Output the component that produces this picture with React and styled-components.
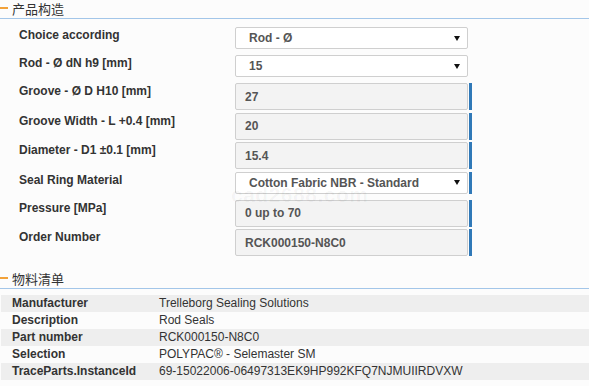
import React from "react";
import styled, { createGlobalStyle } from "styled-components";

const GlobalStyle = createGlobalStyle`
  body {
    margin: 0;
    background-color: #fcfcfc;
    font-family: "Liberation Sans", Arial, sans-serif;
  }
`;

const Page = styled.div`
  position: relative;
  width: 589px;
  height: 386px;
  overflow: hidden;
  background-color: #fcfcfc;
`;

const SectionTitle = styled.div`
  display: flex;
  align-items: center;
  height: 18px;
  border-bottom: 1px solid #a3c6e9;
  margin-top: ${(p) => p.$top || 0}px;
`;

const Dash = styled.span`
  width: 8px;
  height: 2px;
  background-color: #f2a23a;
  margin-top: -2px;
`;

const TitleText = styled.span`
  margin-left: 4px;
  font-family: "Noto Sans CJK SC", "Liberation Sans", sans-serif;
  font-size: 13px;
  line-height: 16px;
  color: #333;
`;

const Form = styled.div`
  padding-top: 8px;
`;

const Row = styled.div`
  display: grid;
  grid-template-columns: 235px 233px 4px;
  align-items: start;
  margin-bottom: ${(p) => (p.$select ? 6 : 2.5)}px;
`;

const Label = styled.div`
  padding-left: 19px;
  font-size: 12px;
  font-weight: bold;
  line-height: 16px;
  color: #333;
`;

const SelectBox = styled.div`
  box-sizing: border-box;
  height: 22px;
  display: flex;
  align-items: center;
  justify-content: space-between;
  padding: 0 7px 0 13px;
  background-color: #fff;
  border: 1px solid #cfcfcf;
  border-radius: 2px;
  font-size: 12px;
  font-weight: bold;
  color: #555;
`;

const InputBox = styled.div`
  box-sizing: border-box;
  height: 27px;
  display: flex;
  align-items: center;
  padding: 0 9px;
  background-color: #f3f3f3;
  border: 1px solid #cfcfcf;
  border-radius: 2px;
  font-size: 12px;
  font-weight: bold;
  color: #555;
`;

const Bar = styled.div`
  margin-left: 1px;
  width: 3px;
  height: ${(p) => (p.$select ? 22 : 27)}px;
  background-color: #3079b8;
`;

const Arrow = () => (
  <svg width="6" height="5" viewBox="0 0 6 5">
    <path d="M0 0 H6 L3 5 Z" fill="#111" />
  </svg>
);

const Table = styled.div`
  margin: 6px 0 0 1px;
`;

const TableRow = styled.div`
  display: grid;
  grid-template-columns: 158px 1fr;
  height: 17px;
  align-items: center;
  background-color: ${(p) => (p.$shaded ? "#eeeeee" : "transparent")};
  font-size: 12px;
  color: #333;
`;

const Key = styled.div`
  padding-left: 11px;
  font-weight: bold;
`;

const Value = styled.div`
  white-space: nowrap;
`;

const Watermark = styled.div`
  position: absolute;
  left: 231px;
  top: 183px;
  font-size: 21px;
  font-weight: bold;
  color: rgba(0, 0, 0, 0.045);
  pointer-events: none;
  letter-spacing: 0.5px;
`;

const fields = [
  { label: "Choice according", value: "Rod - Ø", select: true },
  { label: "Rod - Ø dN h9 [mm]", value: "15", select: true },
  { label: "Groove - Ø D H10 [mm]", value: "27", bar: true },
  { label: "Groove Width - L +0.4 [mm]", value: "20", bar: true },
  { label: "Diameter - D1 ±0.1 [mm]", value: "15.4", bar: true },
  { label: "Seal Ring Material", value: "Cotton Fabric NBR - Standard", select: true, bar: true },
  { label: "Pressure [MPa]", value: "0 up to 70", bar: true },
  { label: "Order Number", value: "RCK000150-N8C0", bar: true },
];

const bom = [
  ["Manufacturer", "Trelleborg Sealing Solutions"],
  ["Description", "Rod Seals"],
  ["Part number", "RCK000150-N8C0"],
  ["Selection", "POLYPAC® - Selemaster SM"],
  ["TraceParts.InstanceId", "69-15022006-06497313EK9HP992KFQ7NJMUIIRDVXW"],
];

export default function App() {
  return (
    <Page>
      <GlobalStyle />
      <SectionTitle>
        <Dash />
        <TitleText>产品构造</TitleText>
      </SectionTitle>
      <Form>
        {fields.map((f) => (
          <Row key={f.label} $select={f.select}>
            <Label>{f.label}</Label>
            {f.select ? (
              <SelectBox>
                <span>{f.value}</span>
                <Arrow />
              </SelectBox>
            ) : (
              <InputBox>{f.value}</InputBox>
            )}
            {f.bar ? <Bar $select={f.select} /> : <span />}
          </Row>
        ))}
      </Form>
      <SectionTitle $top={13.5}>
        <Dash />
        <TitleText>物料清单</TitleText>
      </SectionTitle>
      <Table>
        {bom.map(([k, v], i) => (
          <TableRow key={k} $shaded={i % 2 === 0}>
            <Key>{k}</Key>
            <Value>{v}</Value>
          </TableRow>
        ))}
      </Table>
      <Watermark>cad2688.com</Watermark>
    </Page>
  );
}
